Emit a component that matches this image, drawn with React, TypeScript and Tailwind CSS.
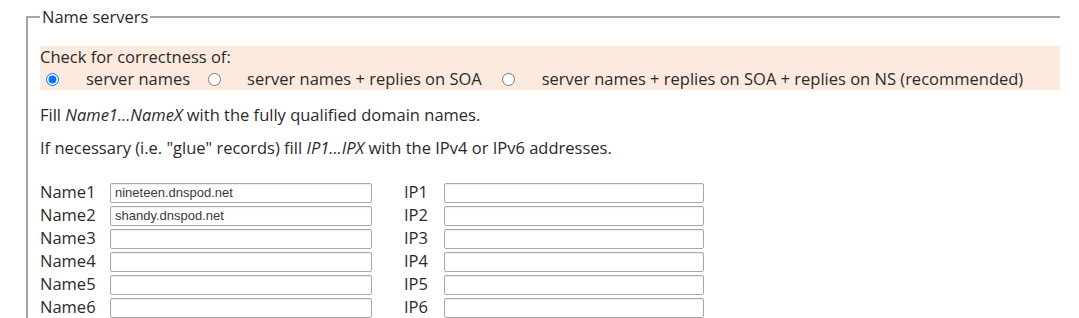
import React from 'react';

const font = { fontFamily: '"Open Sans", "Noto Sans", sans-serif' };

const names = ['nineteen.dnspod.net', 'shandy.dnspod.net', '', '', '', ''];

export default function App() {
  return (
    <div className="w-[1079px] h-[318px] overflow-hidden bg-white text-[16.5px] text-[#2a2a2a]" style={font}>
      <div className="pt-[6px]">
        <fieldset className="ml-[26px] w-[1034px] border-2 border-r-0 border-b-0 border-[#a4a4a4] pl-[12px]">
          <legend className="px-[2px] leading-[22px]">Name servers</legend>

          {/* check level */}
          <div className="mt-[18px] bg-[#fdeadf] leading-[22px]">
            <div>Check for correctness of:</div>
            <div className="flex items-center h-[22px]">
              <input type="radio" name="level" defaultChecked className="m-0 ml-[6px] mr-[27px] w-[13px] h-[13px]" />
              <span>server names</span>
              <input type="radio" name="level" className="m-0 ml-[18px] mr-[26px] w-[13px] h-[13px]" />
              <span>server names + replies on SOA</span>
              <input type="radio" name="level" className="m-0 ml-[20px] mr-[27px] w-[13px] h-[13px]" />
              <span>server names + replies on SOA + replies on NS (recommended)</span>
            </div>
          </div>

          <p className="mt-[14px] leading-[22px]">
            Fill <i>Name1...NameX</i> with the fully qualified domain names.
          </p>
          <p className="mt-[11px] leading-[22px]">
            If necessary (i.e. "glue" records) fill <i>IP1...IPX</i> with the IPv4 or IPv6 addresses.
          </p>

          {/* name / ip rows */}
          <div className="mt-[23px] -translate-y-[1px]">
            {names.map((n, i) => (
              <div key={i} className="flex items-center h-[23px]">
                <span className="w-[70px]">Name{i + 1}</span>
                <input
                  type="text"
                  defaultValue={n}
                  className="w-[262px] h-[20px] border border-[#a8a8a8] rounded-[2px] px-[4px] text-[13px] text-[#3a3a3a] shadow-[inset_0_1px_1px_rgba(0,0,0,0.08)]"
                  style={{ fontFamily: '"Liberation Sans", Arial, sans-serif' }}
                />
                <span className="ml-[32px] w-[40px]">IP{i + 1}</span>
                <input
                  type="text"
                  className="w-[260px] h-[20px] border border-[#a8a8a8] rounded-[2px] px-[4px] text-[13px] shadow-[inset_0_1px_1px_rgba(0,0,0,0.08)]"
                />
              </div>
            ))}
          </div>
        </fieldset>
      </div>
    </div>
  );
}
